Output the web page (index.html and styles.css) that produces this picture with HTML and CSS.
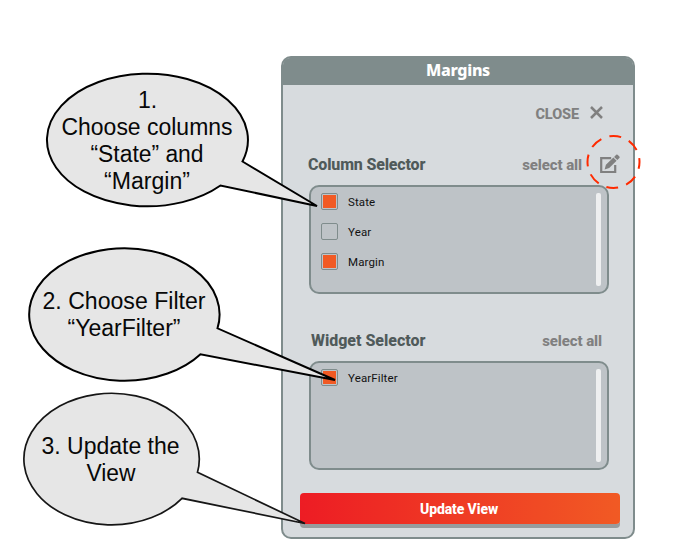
FILE: index.html
```html
<!DOCTYPE html>
<html lang="en">
<head>
<meta charset="utf-8">
<title>Margins</title>
<link rel="stylesheet" href="styles.css">
</head>
<body>
<main class="panel">
  <h1 class="panel-title">Margins</h1>
  <div class="close-row">
    <span class="link close-label">CLOSE</span>
    <svg class="close-icon" viewBox="0 0 13 13"><path d="M1 1 12 12M12 1 1 12"/></svg>
  </div>
  <section class="selector columns">
    <header class="selector-head">
      <h2>Column Selector</h2>
      <span class="link">select all</span>
      <svg class="edit-icon" viewBox="0 0 20 20"><path class="frame" d="M11.2 4.2H1.2v13.8h14V11"/><path class="pencil" d="M4.6 15.4 5.9 10.8 13.4 3.6 16.6 6.8 9.2 14.1ZM14.1 2.9 16.2.8Q16.9.1 17.6.8L19.4 2.6Q20.1 3.3 19.4 4L17.3 6.1Z"/></svg>
    </header>
    <div class="list">
      <div class="options">
        <label class="option"><i class="box on"></i><span>State</span></label>
        <label class="option"><i class="box"></i><span>Year</span></label>
        <label class="option"><i class="box on"></i><span>Margin</span></label>
      </div>
      <div class="scrollbar"></div>
    </div>
  </section>
  <section class="selector widgets">
    <header class="selector-head">
      <h2>Widget Selector</h2>
      <span class="link">select all</span>
    </header>
    <div class="list">
      <div class="options">
        <label class="option"><i class="box on"></i><span>YearFilter</span></label>
      </div>
      <div class="scrollbar"></div>
    </div>
  </section>
  <button class="update">Update View</button>
</main>
<svg class="callouts" viewBox="0 0 694 560">
  <path class="bubble" d="M242.5 161.5A100.5 66.3 0 1 0 220.5 185.5L317 206Z"/>
  <path class="bubble" d="M217.5 328.3A95.2 66.2 0 1 0 200.5 354.3L335 380Z"/>
  <path class="bubble thin" d="M197.5 472.3A87.7 65.8 0 1 0 182 498.3L305 523.5Z"/>
  <g class="note">
    <text x="147.5" y="108">1.</text>
    <text x="147" y="135" textLength="171" lengthAdjust="spacingAndGlyphs">Choose columns</text>
    <text x="147" y="162" textLength="113" lengthAdjust="spacingAndGlyphs">“State” and</text>
    <text x="147" y="189" textLength="86" lengthAdjust="spacingAndGlyphs">“Margin”</text>
    <text x="124" y="309" textLength="163" lengthAdjust="spacingAndGlyphs">2. Choose Filter</text>
    <text x="124" y="336" textLength="113" lengthAdjust="spacingAndGlyphs">“YearFilter”</text>
    <text x="110.5" y="453.5" textLength="138" lengthAdjust="spacingAndGlyphs">3. Update the</text>
    <text x="111" y="480.5" textLength="49" lengthAdjust="spacingAndGlyphs">View</text>
  </g>
  <circle class="ring" cx="613.5" cy="162" r="26"/>
</svg>
</body>
</html>
```
FILE: styles.css
```css
* { box-sizing: border-box; }
body {
  margin: 0;
  width: 694px;
  height: 560px;
  overflow: hidden;
  background: #fff;
  font-family: Roboto, "Liberation Sans", sans-serif;
}
.panel {
  width: 354px;
  height: 483px;
  margin: 56px 0 0 281px;
  border: 2px solid #7f8c8c;
  border-radius: 10px;
  background: #d7dbde;
}
.panel-title {
  margin: 0;
  height: 27px;
  background: #7f8c8c;
  border-radius: 7px 7px 0 0;
  color: #fff;
  font: 800 16px/25px "Noto Sans", sans-serif;
  letter-spacing: -.3px;
  text-align: center;
}
.close-row {
  display: flex;
  align-items: center;
  justify-content: flex-end;
  gap: 11px;
  height: 20px;
  margin: 19px 30px 0 0;
}
.link {
  color: #808080;
  font-size: 15px;
  font-weight: 800;
  line-height: 20px;
  white-space: nowrap;
}
.close-label { font-size: 14.5px; letter-spacing: -.1px; padding-top: 2px; }
.close-icon { width: 13px; height: 13px; margin-top: -3px; }
.close-icon path { fill: none; stroke: #808080; stroke-width: 2.5; }
.selector { margin: 0 24px 0 26px; }
.columns { margin-top: 30px; }
.widgets { margin-top: 36px; }
.selector-head {
  display: flex;
  align-items: center;
  height: 20px;
}
.selector-head h2 {
  margin: 0 auto 0 -1px;
  padding-top: 2px;
  color: #505a5a;
  font-size: 16px;
  font-weight: 800;
  line-height: 20px;
  letter-spacing: -.17px;
}
.selector-head .link { padding-top: 2px; letter-spacing: -.1px; }
.columns .selector-head { margin-right: -11px; }
.widgets .selector-head { padding: 0 7px 0 3px; }
.widgets h2 { letter-spacing: -.02px; }
.edit-icon { width: 20px; height: 20px; margin-left: 18px; overflow: visible; }
.frame { fill: none; stroke: #808080; stroke-width: 2.2; }
.pencil { fill: #808080; }
.list {
  display: flex;
  justify-content: space-between;
  height: 109px;
  margin-top: 11px;
  padding: 6px 6px 6px 10px;
  border: 2px solid #7f8c8c;
  border-radius: 10px;
  background: #bec3c7;
}
.options { display: flex; flex-direction: column; gap: 13px; }
.option {
  display: flex;
  align-items: center;
  gap: 10px;
  height: 17px;
  font-size: 11.5px;
  letter-spacing: .12px;
  color: #111;
}
.box {
  width: 17px;
  height: 17px;
  border: 1px solid #7f8c8c;
  border-radius: 2px;
}
.on { padding: 1px; background: #f15a24 content-box; }
.scrollbar { width: 5px; height: 93px; border-radius: 2px; background: #eeeff0; }
.update {
  display: block;
  width: 320px;
  height: 31px;
  margin: 23px 0 0 17px;
  padding: 1px 0 0;
  border: 0;
  border-radius: 4px;
  background: linear-gradient(90deg, #ed1c24, #f15a24);
  box-shadow: 0 4px #989c9d;
  color: #fff;
  font: 800 14px/30px Roboto, sans-serif;
  letter-spacing: -.1px;
  text-indent: -2px;
}
.callouts {
  position: absolute;
  top: 0;
  left: 0;
  width: 694px;
  height: 560px;
  pointer-events: none;
}
.bubble { fill: #e6e6e6; stroke: #000; stroke-width: 2; stroke-linejoin: miter; stroke-miterlimit: 3; }
.thin { stroke: #161616; stroke-width: 1.7; }
.note text { font: 23px "Liberation Sans", sans-serif; text-anchor: middle; fill: #080808; }
.ring { fill: none; stroke: #ff2a00; stroke-width: 2; stroke-dasharray: 12 8.42; stroke-dashoffset: 5; }
```
